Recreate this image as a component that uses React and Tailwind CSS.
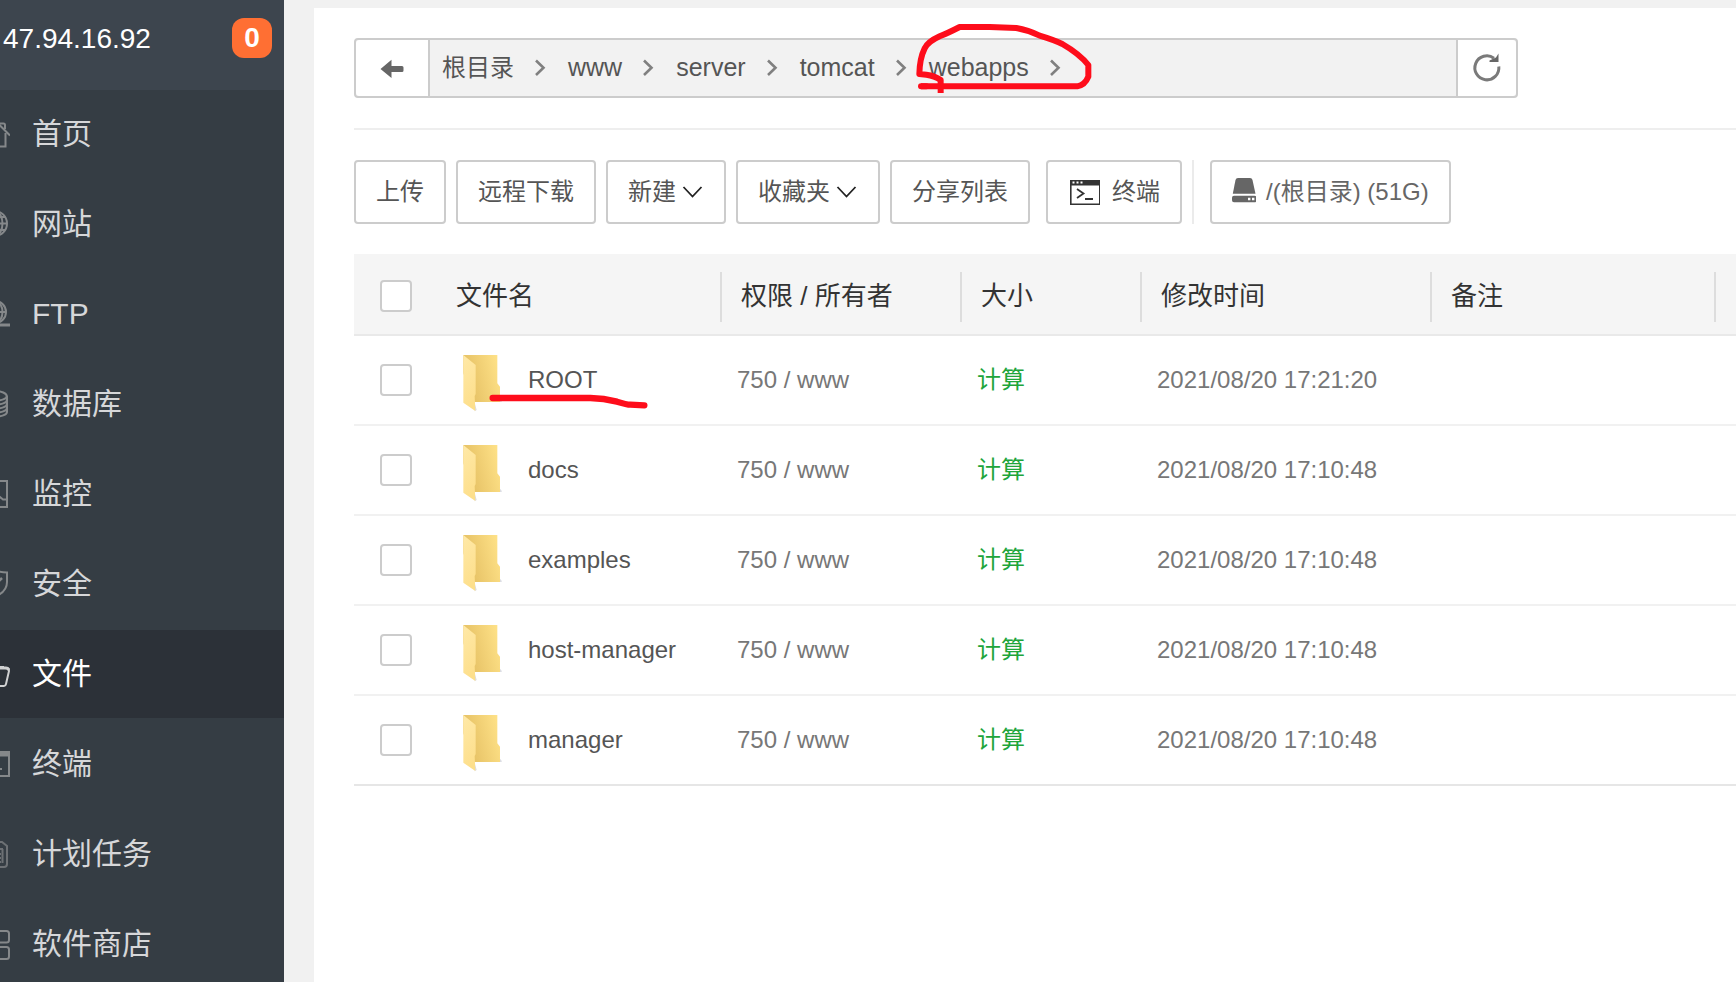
import React from "react";

const NAV = [
  { label: "首页", icon: "home" },
  { label: "网站", icon: "globe" },
  { label: "FTP", icon: "ftp" },
  { label: "数据库", icon: "database" },
  { label: "监控", icon: "monitor" },
  { label: "安全", icon: "shield" },
  { label: "文件", icon: "folder", active: true },
  { label: "终端", icon: "terminal" },
  { label: "计划任务", icon: "schedule" },
  { label: "软件商店", icon: "store" },
];

const CRUMBS = ["根目录", "www", "server", "tomcat", "webapps"];

const FILES = [
  { name: "ROOT", time: "2021/08/20 17:21:20", marked: true },
  { name: "docs", time: "2021/08/20 17:10:48" },
  { name: "examples", time: "2021/08/20 17:10:48" },
  { name: "host-manager", time: "2021/08/20 17:10:48" },
  { name: "manager", time: "2021/08/20 17:10:48" },
];

const NAV_ICONS = {
  home: (
    <>
      <path d="M1 19L16 5M20 6.500L32 18.500" />
      <path d="M21 6.500h4.500q1.500 0 1.500 1.500v4" />
      <path d="M5 17v12.500h8v-9h6v9h8.500V16" />
    </>
  ),
  globe: (
    <>
      <circle cx="16.500" cy="16.500" r="12.500" />
      <ellipse cx="16.500" cy="16.500" rx="8" ry="12.500" />
      <path d="M4 16.500h25M6 10h21M6 23h21" />
    </>
  ),
  ftp: (
    <>
      <circle cx="17" cy="15" r="11" />
      <ellipse cx="17" cy="15" rx="7.500" ry="11" />
      <path d="M6 15h22" />
      <path d="M2 28h30" strokeWidth="3" />
    </>
  ),
  database: (
    <>
      <path d="M29 10v15c0 6-24 6-24 0V10c0-8 24-8 24 0z" />
      <path d="M5 9c0 6 24 6 24 0M5 13c0 6 24 6 24 0M5 17c0 6 24 6 24 0M5 21c0 6 24 6 24 0" />
    </>
  ),
  monitor: (
    <>
      <path d="M3 4h26v26H3z" />
      <path d="M3 22h7l4-9 5 12 3-5 3 2.500h4" />
    </>
  ),
  shield: (
    <>
      <path d="M16 2.500c4 2.500 9 3 13 3v9.500c0 7-5 12-13 15C8 27 3 22 3 15V5.500c4 0 9-.5 13-3z" />
      <path d="M9 14l6 6 9-9" strokeWidth="2.500" />
    </>
  ),
  folder: (
    <>
      <path d="M3 26V6h9l3 4h11" />
      <path d="M7 11h20q4 0 4 3L28 27q-.5 2-2 2H3z" />
      <path d="M8 11h20q2 0 3 2" strokeWidth="3" />
    </>
  ),
  terminal: (
    <>
      <path d="M2 5h29v24H2z" />
      <path d="M2 7h30" strokeWidth="5" />
      <path d="M7 13l5 5-5 5M15 22h9" />
    </>
  ),
  schedule: (
    <g opacity="0.7">
      <path d="M7 5h17l5 4v18q0 3-3 3H8q-3 0-3-3V8q0-3 3-3z" />
      <path d="M9 12h16M9 17h14M9 21h14M9 25h14M24.500 12v14" />
    </g>
  ),
  store: (
    <>
      <rect x="1" y="4" width="12" height="11" rx="2.500" />
      <rect x="18" y="4" width="13" height="11.500" rx="2.500" />
      <rect x="1" y="20" width="12" height="12" rx="2.500" />
      <rect x="18" y="20" width="13" height="12" rx="2.500" />
    </>
  ),
};

function NavIcon({ name, active }) {
  return (
    <svg
      viewBox="0 0 32 34"
      aria-hidden="true"
      className={
        "-ml-[22px] h-[34px] w-8 shrink-0 " + (active ? "text-[#d0d1d2]" : "text-[#85888a]")
      }
      fill="none"
      stroke="currentColor"
      strokeWidth="2"
    >
      {NAV_ICONS[name]}
    </svg>
  );
}

function Sidebar() {
  return (
    <aside className="flex w-[284px] shrink-0 flex-col overflow-hidden bg-[#353d44]">
      <div className="flex h-[90px] shrink-0 items-start justify-between bg-[#3d454e] pt-[18px] pr-3 pl-[3px] text-[28px] text-white">
        <span className="leading-[42px]">47.94.16.92</span>
        <span className="flex size-10 items-center justify-center rounded-xl bg-[#ff6f33] font-bold">
          0
        </span>
      </div>
      <nav className="flex flex-col gap-0.5">
        {NAV.map((item) => (
          <a
            key={item.label}
            href="#"
            className={
              "flex h-[88px] shrink-0 items-center gap-[22px] text-[30px] leading-10 " +
              (item.active ? "bg-[#2c3138] text-white" : "text-[#d6d7d9]")
            }
          >
            <NavIcon name={item.icon} active={item.active} />
            {item.label}
          </a>
        ))}
      </nav>
    </aside>
  );
}

function PathBar() {
  return (
    <div className="flex h-[60px] w-full max-w-[1164px] rounded border-2 border-[#ccc] bg-[#f2f2f2]">
      <button
        type="button"
        aria-label="返回"
        className="flex w-[74px] shrink-0 items-center justify-center rounded-l-sm border-r-2 border-[#ccc] bg-white text-[#666]"
      >
        <svg viewBox="0 0 24 20" className="h-5 w-6" fill="currentColor" aria-hidden="true">
          <path d="M.5 11L11.500 1.800v6.200H22a1.500 1.500 0 0 1 1.500 1.500v3a1.500 1.500 0 0 1-1.500 1.500H11.500v6z" />
        </svg>
      </button>
      <ol className="flex min-w-0 grow pl-3 text-[#555]">
        {CRUMBS.map((crumb, i) => (
          <li key={crumb} className="relative flex items-center">
            <a href="#" className={i === 0 ? "text-[24px]" : "text-[25px]"}>
              {crumb}
            </a>
            <svg
              viewBox="0 0 54 20"
              className="h-5 w-[54px]"
              fill="none"
              stroke="#808080"
              strokeWidth="2.600"
              aria-hidden="true"
            >
              <path d="M22 2.500l7.500 7.300L22 17" />
            </svg>
            {crumb === "webapps" && (
              <svg
                viewBox="520 60 546 231"
                className="pointer-events-none absolute -top-5 -left-4 h-[77px] w-[182px]"
                fill="none"
                stroke="#fe0d1b"
                strokeWidth="18"
                strokeLinejoin="round"
                aria-hidden="true"
              >
                <path d="M603 279V240Q585 227 560 224L539 222Q540 175 555 145Q565 125 600 109Q625 99 660 81H750Q800 83 830 84Q865 90 900 107Q940 119 968 132Q1020 162 1046 195V230Q1036 255 1013 259H544" />
                <path d="M560 259H544" strokeLinecap="round" />
              </svg>
            )}
          </li>
        ))}
      </ol>
      <button
        type="button"
        aria-label="刷新"
        className="flex w-[60px] shrink-0 items-center justify-center rounded-r-sm border-l-2 border-[#ccc] bg-white"
      >
        <svg viewBox="0 0 32 32" className="size-8" fill="none" aria-hidden="true">
          <path d="M27.800 14.500A12 12 0 1 1 23 6.200" stroke="#7a7a7a" strokeWidth="3" />
          <path d="M27.500 1.500V10H18.500V8.500L25 5.500z" fill="#666" />
        </svg>
      </button>
    </div>
  );
}

function Caret() {
  return (
    <svg
      viewBox="0 0 22 14"
      className="h-3.5 w-[22px]"
      fill="none"
      stroke="#222"
      strokeWidth="1.800"
      aria-hidden="true"
    >
      <path d="M1.500 2L10.500 11.500l9-9.500" />
    </svg>
  );
}

function ToolButton({ className = "", children }) {
  return (
    <button
      type="button"
      className={
        "flex h-16 shrink-0 items-center rounded border-2 border-[#ccc] bg-white px-5 text-[24px] " +
        className
      }
    >
      {children}
    </button>
  );
}

function Toolbar() {
  return (
    <div className="flex gap-2.5 pt-[30px] text-[#555]">
      <ToolButton>上传</ToolButton>
      <ToolButton>远程下载</ToolButton>
      <ToolButton className="gap-1.5">
        新建
        <Caret />
      </ToolButton>
      <ToolButton className="gap-1.5">
        收藏夹
        <Caret />
      </ToolButton>
      <ToolButton>分享列表</ToolButton>
      <ToolButton className="ml-1.5 gap-3">
        <svg viewBox="0 0 32 28" className="h-7 w-8" aria-hidden="true">
          <path d="M2.800 2.800h29v23.500h-29z" fill="none" stroke="#333" strokeWidth="1.600" />
          <path d="M2 2h30v5.500H2z" fill="#333" />
          <path d="M4.500 4.500h2M8.500 4.500h2M12.500 4.500h2" stroke="#fff" strokeWidth="1.800" />
          <path d="M9 11l6.500 4.500L9 20M17 21h8" fill="none" stroke="#333" strokeWidth="1.800" />
        </svg>
        终端
      </ToolButton>
      <div className="mr-1.5 w-0.5 bg-[#ebebeb]" />
      <ToolButton className="gap-2.5 text-[#666]">
        <svg viewBox="0 0 24 28" className="h-7 w-6" fill="currentColor" aria-hidden="true">
          <path d="M6 0h12q2 0 2.500 2L23.500 15.800H.8L3.500 2Q4 0 6 0z" />
          <path
            fillRule="evenodd"
            d="M2 17.800h20.500q2 0 2 2v2.400q0 2-2 2H2q-2 0-2-2v-2.400q0-2 2-2zM16 19.800v2.400h2.400v-2.400zM20 19.800v2.400h2.400v-2.400z"
          />
        </svg>
        /(根目录) (51G)
      </ToolButton>
    </div>
  );
}

function FolderIcon() {
  return (
    <svg viewBox="366 324 120 192" className="h-16 w-10 shrink-0" aria-hidden="true">
      <defs>
        <linearGradient id="folder-back" x1="0" y1="0.600" x2="1" y2="0.300">
          <stop offset="0.200" stopColor="#e8c468" />
          <stop offset="1" stopColor="#fee187" />
        </linearGradient>
        <linearGradient id="folder-front" x1="0" y1="0" x2="0.300" y2="1">
          <stop offset="0" stopColor="#ffe9a8" />
          <stop offset="1" stopColor="#fddf8c" />
        </linearGradient>
      </defs>
      <path d="M404 488l6 22-6 4zM480 476l5 6v4h-6z" fill="#dcdde3" />
      <path d="M370 345H472V430L480 440V486H400L370 400z" fill="url(#folder-back)" />
      <path d="M370 345L407 375V462L404 468L406 513L370 488z" fill="url(#folder-front)" />
    </svg>
  );
}

function Checkbox({ label }) {
  return (
    <input
      type="checkbox"
      aria-label={label}
      className="block size-8 appearance-none rounded border-2 border-[#ccc] bg-white"
    />
  );
}

function HeadCell({ children, first }) {
  return (
    <th className="border-b-2 border-[#e9e9e9] p-0 pt-[18px] pb-3 text-left font-normal">
      <div
        className={
          "flex h-[50px] items-center border-r-2 border-[#ddd] pb-0.5 " + (first ? "" : "pl-[19px]")
        }
      >
        {children}
      </div>
    </th>
  );
}

function FileTable() {
  return (
    <table className="mt-[30px] w-full table-fixed border-separate border-spacing-0 text-[24px]">
      <colgroup>
        <col className="w-[102px]" />
        <col className="w-[266px]" />
        <col className="w-60" />
        <col className="w-[180px]" />
        <col className="w-[290px]" />
        <col className="w-[284px]" />
        <col />
      </colgroup>
      <thead className="bg-[#f5f5f5] text-[26px] text-[#333]">
        <tr>
          <th className="border-b-2 border-[#e9e9e9] p-0 pt-1 pl-[26px]">
            <Checkbox label="全选" />
          </th>
          <HeadCell first>文件名</HeadCell>
          <HeadCell>权限 / 所有者</HeadCell>
          <HeadCell>大小</HeadCell>
          <HeadCell>修改时间</HeadCell>
          <HeadCell>备注</HeadCell>
          <th className="border-b-2 border-[#e9e9e9] p-0" />
        </tr>
      </thead>
      <tbody className="text-[#777]">
        {FILES.map((file) => (
          <tr
            key={file.name}
            className="[&>td]:h-[90px] [&>td]:border-b-2 [&>td]:border-[#f1f1f1] [&>td]:p-0 last:[&>td]:border-[#e6e6e6]"
          >
            <td>
              <div className="pl-[26px]">
                <Checkbox label={file.name} />
              </div>
            </td>
            <td>
              <div className="flex items-center gap-[26px] pl-1.5">
                <FolderIcon />
                <a href="#" className="relative text-[#555]">
                  {file.name}
                  {file.marked && (
                    <svg
                      viewBox="440 460 489 54"
                      className="pointer-events-none absolute top-[31px] -left-[41px] h-[18px] w-[163px]"
                      fill="none"
                      stroke="#fe0d1b"
                      strokeWidth="19"
                      strokeLinecap="round"
                      aria-hidden="true"
                    >
                      <path d="M457 475H750Q790 476 830 486Q860 495 870 495L912 497" />
                    </svg>
                  )}
                </a>
              </div>
            </td>
            <td>
              <div className="pl-[15px]">750 / www</div>
            </td>
            <td>
              <div className="pl-[15px]">
                <a href="#" className="text-[#20a53a]">
                  计算
                </a>
              </div>
            </td>
            <td>
              <div className="pl-[15px]">{file.time}</div>
            </td>
            <td />
            <td />
          </tr>
        ))}
      </tbody>
    </table>
  );
}

export default function App() {
  return (
    <div className="flex h-screen overflow-hidden bg-[#f1f1f1] font-['Liberation_Sans','Noto_Sans_CJK_SC',sans-serif]">
      <Sidebar />
      <main className="mt-2 ml-[30px] min-w-0 grow overflow-hidden bg-white pt-[30px] pl-10">
        <div className="border-b-2 border-[#eee] pb-[30px]">
          <PathBar />
        </div>
        <Toolbar />
        <FileTable />
      </main>
    </div>
  );
}
